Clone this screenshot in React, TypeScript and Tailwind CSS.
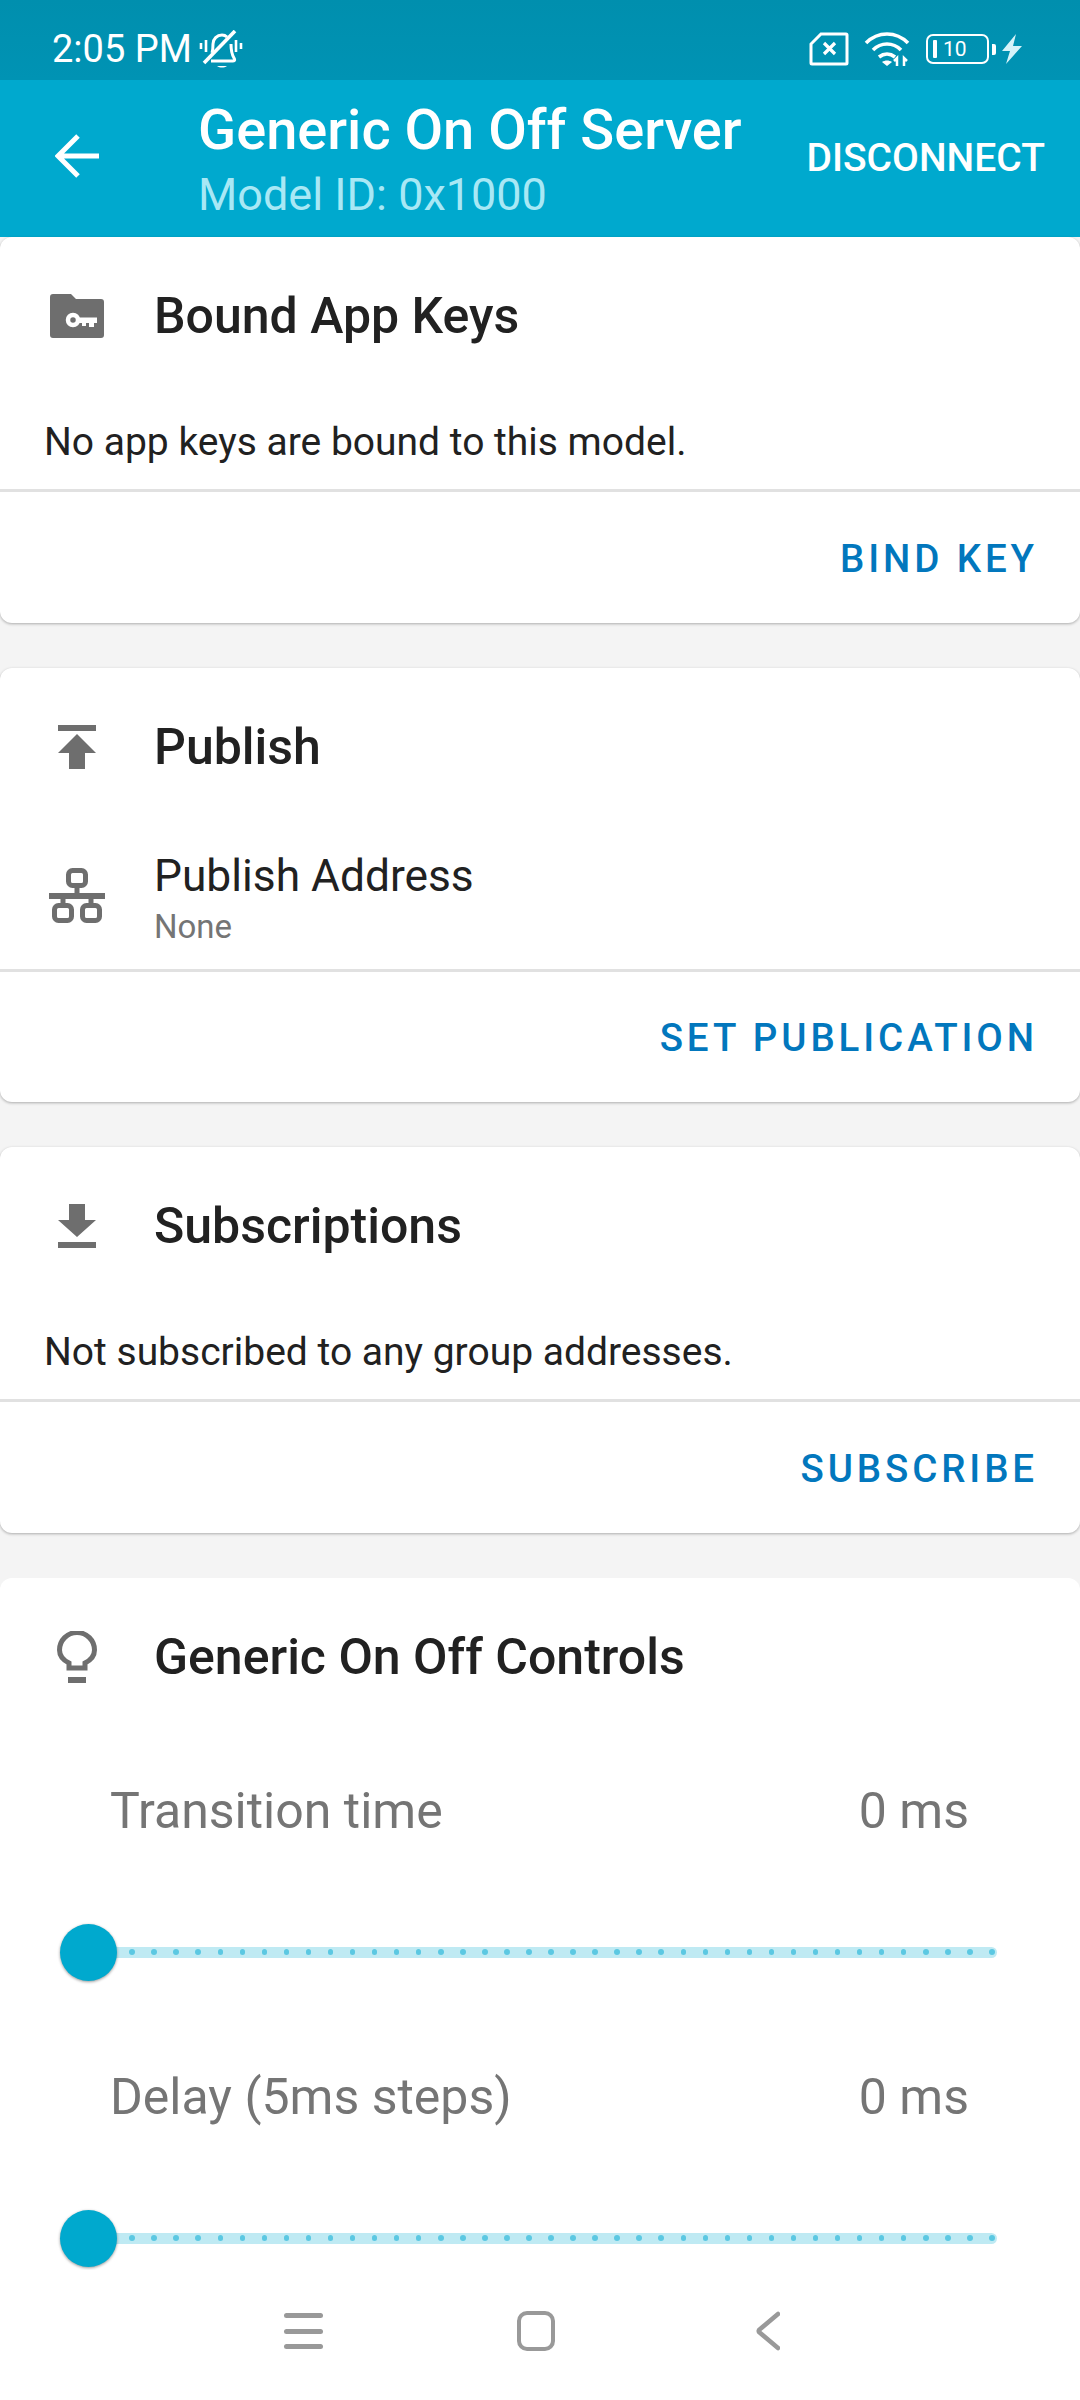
import type { ReactNode } from "react";

const DOT_COUNT = 42;

function MutedBell() {
  return (
    <svg viewBox="0 0 46 38" className="ml-[6px] h-[38px] w-[46px]" fill="none" stroke="white" strokeWidth="3">
      <path d="M14 23c1-3 1-6 1-9 0-5 4-9 9-9 2 0 4 1 5 2" />
      <path d="M33 14c0 5 0 9 3 14 1 2 1 3-1 3H13" />
      <path d="M3 13v6M8 10v12M38 10v12M43 13v6" strokeWidth="2.600" />
      <path d="M6 33 37 1" strokeWidth="3.600" />
      <path d="M19 36c3 2 7 2 10 0z" fill="white" stroke="none" />
    </svg>
  );
}

function StatusIcons() {
  return (
    <div className="flex items-center">
      <svg viewBox="0 0 40 34" className="h-[34px] w-[40px]" fill="none" stroke="white" strokeWidth="3">
        <path d="M12 2h25a1 1 0 0 1 1 1v28a1 1 0 0 1-1 1H3a1 1 0 0 1-1-1V12z" />
        <path d="M15 11l11 11M26 11 15 22" strokeWidth="3.200" />
      </svg>
      <svg viewBox="0 0 46 36" className="ml-[15px] h-[36px] w-[46px]" fill="none" stroke="white" strokeWidth="3.600">
        <path d="M2 12c12-12 30-12 42 0" />
        <path d="M9 19c8-8 20-8 28 0" />
        <path d="M15 26c5-4 11-4 16 0" />
        <path d="M23 35l-5-4c3-2 7-2 10 0z" fill="white" stroke="none" />
        <path d="M33 35v-8l-3 3M40 35v-8l3 3" strokeWidth="2.500" />
      </svg>
      <div className="ml-[16px] flex h-[30px] w-[63px] items-center rounded-[7px] border-[2.500px] border-white pl-[5px]">
        <div className="h-[18px] w-[4px] rounded-[1px] bg-white" />
        <span className="ml-[6px] text-[21px] leading-none text-white">10</span>
      </div>
      <div className="ml-[3px] h-[11px] w-[4px] rounded-r-[2px] bg-white" />
      <svg viewBox="0 0 20 30" className="ml-[6px] h-[30px] w-[20px]">
        <path d="M14 0 0 17h8L4 30l16-18h-9z" fill="#d5f3f9" />
      </svg>
    </div>
  );
}

function AppKeyIcon() {
  return (
    <svg viewBox="0 0 54 44" className="h-[44px] w-[54px]">
      <path d="M3 0h18l5 5h25a3 3 0 0 1 3 3v33a3 3 0 0 1-3 3H3a3 3 0 0 1-3-3V3a3 3 0 0 1 3-3z" fill="#6e6e6e" />
      <circle cx="23" cy="26" r="5" fill="none" stroke="white" strokeWidth="4.500" />
      <path d="M27 23.500h20v5.500h-3v4h-5v-4h-3v3h-4v-3h-5z" fill="white" />
    </svg>
  );
}

function PublishIcon() {
  return (
    <svg viewBox="0 0 40 44" className="h-[44px] w-[40px]">
      <path d="M1 0h38v6H1zM1 28 20 9l19 19H28v16H12V28z" fill="#6e6e6e" />
    </svg>
  );
}

function SubscribeIcon() {
  return (
    <svg viewBox="0 0 40 44" className="h-[44px] w-[40px]">
      <path d="M12 0h16v16h11L20 33 1 16h11zM1 38h38v6H1z" fill="#6e6e6e" />
    </svg>
  );
}

function NetworkIcon() {
  return (
    <svg viewBox="0 0 56 56" className="h-[56px] w-[56px]" fill="none" stroke="#6e6e6e" strokeWidth="5">
      <rect x="19.500" y="2.500" width="17" height="15" rx="4" />
      <path d="M28 18v10M14 28v8M42 28v8" />
      <path d="M0 28h56" strokeWidth="6" />
      <rect x="5.500" y="37.500" width="17" height="15" rx="4" />
      <rect x="33.500" y="37.500" width="17" height="15" rx="4" />
    </svg>
  );
}

function BulbIcon() {
  return (
    <svg viewBox="0 0 40 52" className="h-[52px] w-[40px]" fill="none" stroke="#6e6e6e" strokeWidth="5">
      <path d="M12 37v-5c-6-3-9.500-7-9.500-13a17.500 17.500 0 0 1 35 0c0 6-3.500 10-9.500 13v5z" />
      <path d="M11 49h18" strokeWidth="6" />
    </svg>
  );
}

function CardHeader({ icon, title }: { icon: ReactNode; title: string }) {
  return (
    <div className="flex h-[158px] items-center">
      <div className="flex w-[153px] shrink-0 justify-center">{icon}</div>
      <h2 className="ml-[1px] text-[50px] leading-none font-medium text-[#212121]">{title}</h2>
    </div>
  );
}

function Card({ children, action }: { children: ReactNode; action: string }) {
  return (
    <section className="rounded-[12px] bg-white shadow-[0_1px_3px_rgba(0,0,0,0.3)]">
      {children}
      <div className="h-[3px] bg-[#e1e1e1]" />
      <div className="flex h-[130.500px] items-center justify-end pt-[3px] pr-[42px]">
        <button className="text-[38.500px] font-medium tracking-[3.900px] text-[#0277bd]">{action}</button>
      </div>
    </section>
  );
}

function Slider({ label, value }: { label: string; value: string }) {
  return (
    <div className="pr-[111px] pl-[110px]">
      <div className="flex h-[60px] items-center justify-between">
        <span className="text-[50px] text-[#757575]">{label}</span>
        <span className="text-[50px] text-[#757575]">{value}</span>
      </div>
      <div className="relative mt-[105px] mr-[-28px] ml-[-27px] flex h-[11px] items-center justify-between rounded-full bg-[#bfeaf3] px-[2.250px]">
        {Array.from({ length: DOT_COUNT }).map((_, i) => (
          <span key={i} className="h-[5.500px] w-[5.500px] rounded-full bg-[#5cc8e2]" />
        ))}
        <div className="absolute top-[-23px] left-[-23px] h-[57px] w-[57px] rounded-full bg-[#00a9ce] shadow-[0_1px_3px_rgba(0,0,0,0.4)]" />
      </div>
    </div>
  );
}

export default function App() {
  return (
    <div className="relative h-[2400px] w-[1080px] overflow-hidden bg-[#f4f4f4] font-['Roboto',sans-serif]">
      <div className="flex h-[80px] items-center justify-between bg-gradient-to-b from-[#008fae] to-[#0093b4] pt-[18px] pr-[58px] pl-[52px]">
        <div className="flex items-center">
          <span className="text-[38px] leading-none text-white">2:05 PM</span>
          <MutedBell />
        </div>
        <StatusIcons />
      </div>

      <header className="flex h-[157px] items-center bg-[#00a9ce]">
        <svg viewBox="0 0 44 44" className="mb-[5px] ml-[55px] h-[44px] w-[44px]" fill="none" stroke="white" strokeWidth="5">
          <path d="M44 22H4M23 2 3 22l20 20" />
        </svg>
        <div className="ml-[99px]">
          <div className="text-[56px] leading-[66px] font-medium text-white">Generic On Off Server</div>
          <div className="mt-[7px] text-[45px] leading-[50px] text-[#a8e8f5]">Model ID: 0x1000</div>
        </div>
        <span className="mr-[35px] ml-auto text-[39px] font-medium text-white">DISCONNECT</span>
      </header>

      <div className="flex flex-col gap-[45px]">
        <Card action="BIND KEY">
          <CardHeader icon={<AppKeyIcon />} title="Bound App Keys" />
          <p className="mt-[25px] pb-[24px] pl-[44px] text-[39px] leading-[45px] text-[#212121]">
            No app keys are bound to this model.
          </p>
        </Card>

        <Card action="SET PUBLICATION">
          <CardHeader icon={<PublishIcon />} title="Publish" />
          <div className="flex h-[143px]">
            <div className="flex w-[153px] shrink-0 justify-center pt-[42px]">
              <NetworkIcon />
            </div>
            <div className="ml-[1px] pt-[24px]">
              <div className="text-[44.300px] leading-[52px] text-[#212121]">Publish Address</div>
              <div className="mt-[5px] text-[33px] leading-[40px] text-[#757575]">None</div>
            </div>
          </div>
        </Card>

        <Card action="SUBSCRIBE">
          <CardHeader icon={<SubscribeIcon />} title="Subscriptions" />
          <p className="mt-[25px] pb-[24px] pl-[44px] text-[39px] leading-[45px] text-[#212121]">
            Not subscribed to any group addresses.
          </p>
        </Card>

        <section className="rounded-t-[12px] bg-white pb-[200px]">
          <CardHeader icon={<BulbIcon />} title="Generic On Off Controls" />
          <div className="mt-[46px] flex flex-col gap-[110px]">
            <Slider label="Transition time" value="0 ms" />
            <Slider label="Delay (5ms steps)" value="0 ms" />
          </div>
        </section>
      </div>

      {/* system navigation sits over the scrolling content */}
      <nav className="absolute right-0 bottom-0 left-0 flex h-[130px] items-center bg-white pb-[8px]">
        <div className="ml-[284px] flex h-[36px] w-[39px] flex-col justify-between">
          <div className="h-[5px] rounded-full bg-[#999999]" />
          <div className="h-[5px] rounded-full bg-[#999999]" />
          <div className="h-[5px] rounded-full bg-[#999999]" />
        </div>
        <div className="ml-[194px] h-[40px] w-[38px] rounded-[10px] border-[4px] border-[#999999]" />
        <svg viewBox="0 0 24 40" className="ml-[201px] h-[40px] w-[24px]" fill="none" stroke="#999999" strokeWidth="4.500" strokeLinecap="round" strokeLinejoin="round">
          <path d="M22 3 3 19a2 2 0 0 0 0 2l19 16" />
        </svg>
      </nav>
    </div>
  );
}
